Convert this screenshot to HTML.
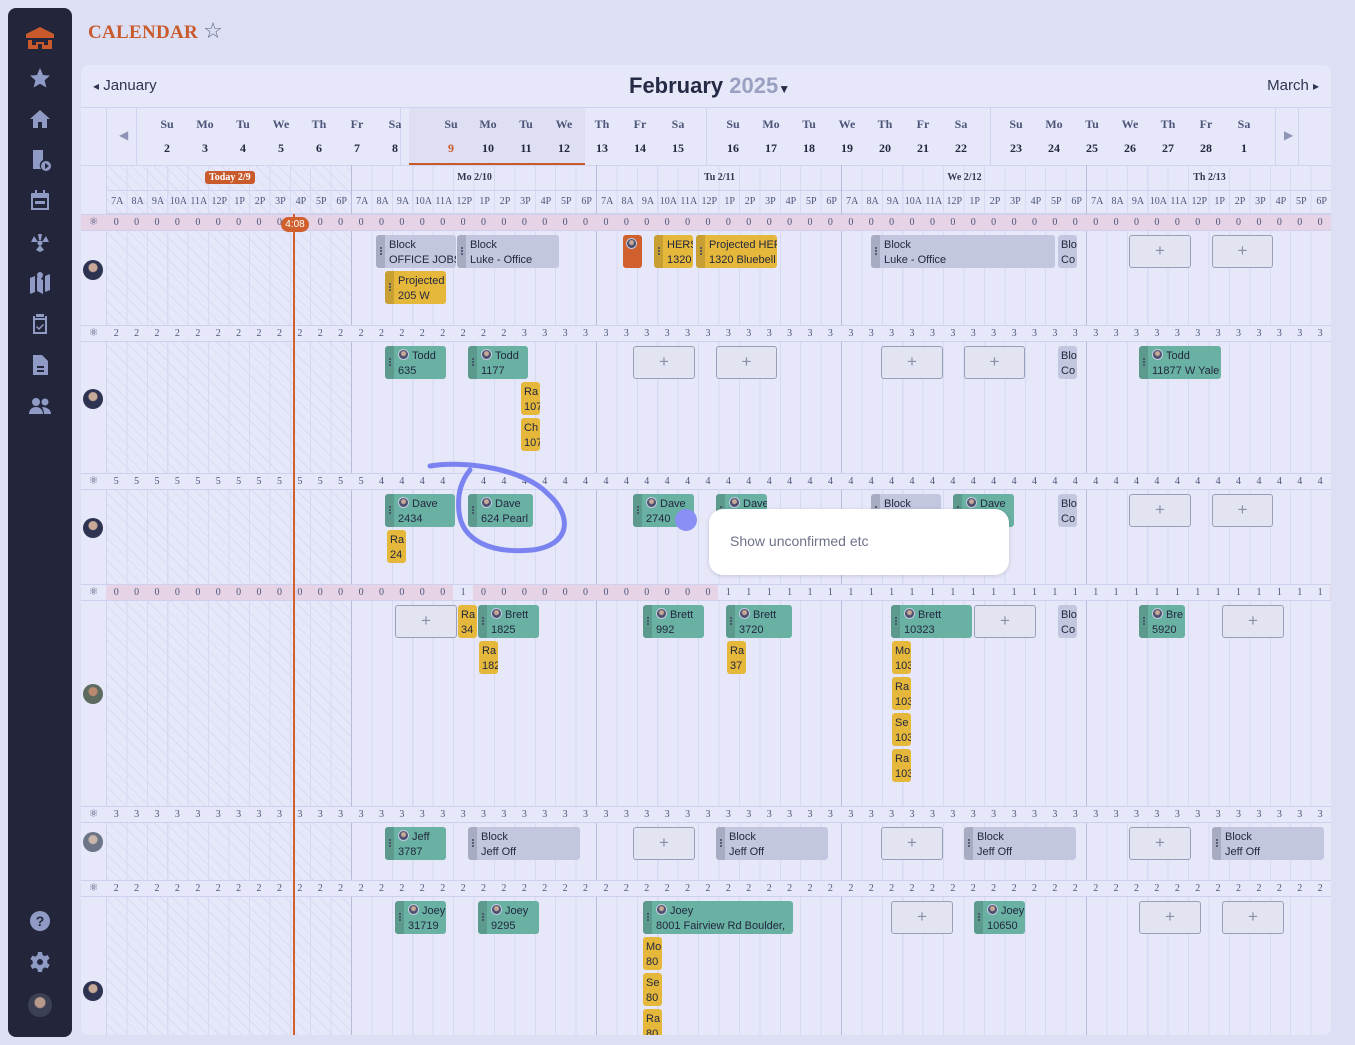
<!DOCTYPE html>
<html><head><meta charset="utf-8">
<style>
*{box-sizing:border-box;margin:0;padding:0}
body{width:1355px;height:1045px;background:#dde0f5;font-family:"Liberation Sans",sans-serif;position:relative;overflow:hidden;color:#2a2f4a}
.a{position:absolute}
.side{left:8px;top:8px;width:64px;height:1029px;background:#23263b;border-radius:8px}
.side svg{position:absolute;left:20px;width:24px;height:24px;fill:#8f9bc4}
.title{left:88px;top:19px;font:bold 19px "Liberation Serif",serif;color:#c95a2c;letter-spacing:.3px}
.card{left:81px;top:65px;width:1250px;height:970px;background:#e6e8fa;border-radius:8px;overflow:hidden}
.wk{font:bold 12px "Liberation Serif",serif;color:#4d5578;text-align:center;width:30px}
.wn{font:bold 12px "Liberation Serif",serif;color:#23283f;text-align:center;width:30px}
.vl{width:1px;background:#cfd3ef}
.day{top:100px;width:245px;height:870px;border-left:1px solid #b8bcd8;background:repeating-linear-gradient(90deg,transparent 0 19.4px,#d6d9f2 19.4px 20.42px)}
.hatch{background:repeating-linear-gradient(90deg,transparent 0 19.4px,#d6d9f2 19.4px 20.42px),repeating-linear-gradient(45deg,transparent 0 7px,#d9dcf2 7px 8px)}
.dh{font:bold 10px "Liberation Serif",serif;text-align:center;width:245px;top:7px;color:#33384f}
.hrs{top:25px;display:flex;width:245px;height:24px;border-top:1px solid #cfd3ef;border-bottom:1px solid #cfd3ef}
.hrs span{width:20.42px;font:10px "Liberation Serif",serif;color:#4d5578;text-align:center;line-height:22px;overflow:hidden;white-space:nowrap}
.cr{left:0;width:1250px;height:17px;display:flex;border-top:1px solid #cdd1ee;border-bottom:1px solid #cdd1ee;background:#e6e8fa}
.cr .ic{width:25px;text-align:center;font-size:11px;color:#4d5578;line-height:15px}
.cr b{width:20.42px;font:normal 10px "Liberation Serif",serif;color:#4d5578;text-align:center;line-height:15px}
.pk{background:#e6d3e6}
.cr.pk b.n{background:#e6e8fa}
.ev{border-radius:3px;font-size:11px;line-height:15px;padding:3px 0 0 13px;overflow:hidden;white-space:nowrap;color:#23283f;height:33px}
.ev:before{content:"";position:absolute;left:0;top:0;width:9px;height:100%;background:rgba(0,0,0,.13);border-radius:3px 0 0 3px}
.ev:after{content:"";position:absolute;left:4px;top:12px;width:2px;height:2px;background:#3d4460;border-radius:1px;box-shadow:0 3px #3d4460,0 6px #3d4460}
.g{background:#c2c6df}.t{background:#69b1a3}.y{background:#e5b73a}
.sm{border-radius:3px;font-size:11px;line-height:15px;padding:3px 0 0 3px;overflow:hidden;white-space:nowrap;width:19px;height:33px;background:#e5b73a;color:#23283f}
.pl{border:1px solid #9a9fb8;background:#e3e4f2;border-radius:3px;height:33px;text-align:center;line-height:30px;color:#8a8fa8;font-size:17px}
.av{width:11px;height:11px;border-radius:50%;background:radial-gradient(circle at 50% 40%,#c8a896 0 2px,#4a5070 3px);display:inline-block;vertical-align:-1px;margin-right:3px;border:1px solid #c7cbe0}
.ra{width:20px;height:20px;border-radius:50%;background:radial-gradient(circle at 50% 38%,#c8a896 0 4px,#2d3350 5px 100%);left:83px}
</style></head><body>
<div class="a side">
<svg style="top:18px;width:30px;left:17px" viewBox="0 0 30 24"><path fill="#c95a2c" d="M15 1 1 8v4h28V8zM3 14v9h10v-5h4v5h10v-9h-4v5h-4v-3h-8v3H7v-5z"/></svg>
<svg style="top:58px" viewBox="0 0 24 24"><path d="M12 2l3 7 7 .6-5.4 4.7 1.7 7.2L12 17.8 5.7 21.5l1.7-7.2L2 9.6 9 9z"/></svg>
<svg style="top:99px" viewBox="0 0 24 24"><path d="M12 3 2 12h3v9h5v-6h4v6h5v-9h3z"/></svg>
<svg style="top:140px" viewBox="0 0 24 24"><path d="M5 2h10v10a6 6 0 0 0-2 9H5zM18 13a5 5 0 1 1 0 10 5 5 0 0 1 0-10zm-1 2v6l4-3z"/></svg>
<svg style="top:181px" viewBox="0 0 24 24"><path d="M7 1h2v3h6V1h2v3h3a1 1 0 0 1 1 1v16H3V5a1 1 0 0 1 1-1h3zM5 9v10h14V9zm2 3h10v3H7z"/></svg>
<svg style="top:222px" viewBox="0 0 24 24"><circle cx="12" cy="13" r="2.5"/><path d="M10 4h4l-1 6h-2zM3 12l3-6 4 6zM21 12l-3-6-4 6zM8 20l4-5 4 5-4 2z"/></svg>
<svg style="top:263px" viewBox="0 0 24 24"><path d="M2 7l5-2v16l-5 2zM17 5l5-2v16l-5 2zM9 6l6 3v14l-6-3zM12 1a3 3 0 0 1 3 3c0 2-3 5-3 5S9 6 9 4a3 3 0 0 1 3-3z"/></svg>
<svg style="top:304px" viewBox="0 0 24 24"><path d="M8 2h8v3H8zM5 4h2v2h10V4h2v18H5zm2 4v12h10V8zm2 6 2 2 4-4 1 1-5 5-3-3z"/></svg>
<svg style="top:345px" viewBox="0 0 24 24"><path d="M5 2h9l6 6v14H5zm4 11v2h7v-2zm0 4v2h7v-2z"/></svg>
<svg style="top:386px" viewBox="0 0 24 24"><circle cx="8" cy="8" r="4"/><circle cx="17" cy="8" r="3.5"/><path d="M1 20c0-4 3-7 7-7s7 3 7 7zM14 13c4 0 9 2 9 7h-7c0-3-1-5-2-7z"/></svg>
<svg style="top:901px" viewBox="0 0 24 24"><circle cx="12" cy="12" r="10"/><text x="12" y="17" font-size="14" font-weight="bold" text-anchor="middle" fill="#23263b" font-family="Liberation Sans">?</text></svg>
<svg style="top:942px" viewBox="0 0 24 24"><path d="M10 2h4l.6 3 2.2 1.2 2.8-1.2 2 3.4-2.3 2v2.6l2.3 2-2 3.4-2.8-1.2L14.6 19 14 22h-4l-.6-3-2.2-1.2-2.8 1.2-2-3.4 2.3-2v-2.6l-2.3-2 2-3.4 2.8 1.2L9.4 5zm2 7a3 3 0 1 0 0 6 3 3 0 0 0 0-6z"/></svg>
<div class="a" style="left:20px;top:985px;width:24px;height:24px;border-radius:50%;background:radial-gradient(circle at 50% 40%,#b8998a 0 5px,#3b4055 6px)"></div>
</div>
<div class="a title">CALENDAR <span style="color:#5c6585;font-size:22px;font-family:'DejaVu Sans'">☆</span></div>

<div class="a card">
<div class="a" style="left:12px;top:12px;font-size:15px;color:#2f3550"><span style="font-size:12px">◂</span> January</div>
<div class="a" style="left:548px;top:8px;font-size:22px;font-weight:bold;color:#252a45">February <span style="color:#9aa0bf">2025</span><span style="font-size:12px">▼</span></div>
<div class="a" style="right:12px;top:12px;font-size:15px;color:#2f3550">March <span style="font-size:12px">▸</span></div>
<div class="a" style="left:0;top:42px;width:1250px;height:1px;background:#cfd3ef"></div>
<div class="a vl" style="left:25px;top:42px;height:58px"></div>
<div class="a vl" style="left:55px;top:42px;height:58px"></div>
<div class="a" style="left:38px;top:63px;color:#8e94b3;font-size:12px">◀</div>
<div class="a vl" style="left:319px;top:42px;height:58px"></div>
<div class="a" style="left:328px;top:43px;width:176px;height:57px;background:#dfdff3;border-bottom:2px solid #c95a2c"></div>
<div class="a vl" style="left:625px;top:42px;height:58px"></div>
<div class="a vl" style="left:909px;top:42px;height:58px"></div>
<div class="a vl" style="left:1194px;top:42px;height:58px"></div>
<div class="a vl" style="left:1217px;top:42px;height:58px"></div>
<div class="a" style="left:1203px;top:63px;color:#8e94b3;font-size:12px">▶</div>
<div class="a" style="left:0;top:100px;width:1250px;height:1px;background:#cfd3ef"></div>
<div class="a" style="top:52px;left:0">
<div class="a wk" style="left:71px">Su</div><div class="a wk" style="left:109px">Mo</div><div class="a wk" style="left:147px">Tu</div><div class="a wk" style="left:185px">We</div><div class="a wk" style="left:223px">Th</div><div class="a wk" style="left:261px">Fr</div><div class="a wk" style="left:299px">Sa</div>
<div class="a wk" style="left:355px">Su</div><div class="a wk" style="left:392px">Mo</div><div class="a wk" style="left:430px">Tu</div><div class="a wk" style="left:468px">We</div><div class="a wk" style="left:506px">Th</div><div class="a wk" style="left:544px">Fr</div><div class="a wk" style="left:582px">Sa</div>
<div class="a wk" style="left:637px">Su</div><div class="a wk" style="left:675px">Mo</div><div class="a wk" style="left:713px">Tu</div><div class="a wk" style="left:751px">We</div><div class="a wk" style="left:789px">Th</div><div class="a wk" style="left:827px">Fr</div><div class="a wk" style="left:865px">Sa</div>
<div class="a wk" style="left:920px">Su</div><div class="a wk" style="left:958px">Mo</div><div class="a wk" style="left:996px">Tu</div><div class="a wk" style="left:1034px">We</div><div class="a wk" style="left:1072px">Th</div><div class="a wk" style="left:1110px">Fr</div><div class="a wk" style="left:1148px">Sa</div>
</div>
<div class="a" style="top:76px;left:0">
<div class="a wn" style="left:71px">2</div><div class="a wn" style="left:109px">3</div><div class="a wn" style="left:147px">4</div><div class="a wn" style="left:185px">5</div><div class="a wn" style="left:223px">6</div><div class="a wn" style="left:261px">7</div><div class="a wn" style="left:299px">8</div>
<div class="a wn" style="left:355px;color:#c95a2c">9</div><div class="a wn" style="left:392px">10</div><div class="a wn" style="left:430px">11</div><div class="a wn" style="left:468px">12</div><div class="a wn" style="left:506px">13</div><div class="a wn" style="left:544px">14</div><div class="a wn" style="left:582px">15</div>
<div class="a wn" style="left:637px">16</div><div class="a wn" style="left:675px">17</div><div class="a wn" style="left:713px">18</div><div class="a wn" style="left:751px">19</div><div class="a wn" style="left:789px">20</div><div class="a wn" style="left:827px">21</div><div class="a wn" style="left:865px">22</div>
<div class="a wn" style="left:920px">23</div><div class="a wn" style="left:958px">24</div><div class="a wn" style="left:996px">25</div><div class="a wn" style="left:1034px">26</div><div class="a wn" style="left:1072px">27</div><div class="a wn" style="left:1110px">28</div><div class="a wn" style="left:1148px">1</div>
</div>

<div class="a vl" style="left:25px;top:100px;height:870px"></div>
<div class="a day hatch" style="left:25px;border-left:1px solid #cfd3ef"><div class="a" style="left:98px;top:6px;background:#c95a2c;color:#fff;font:bold 10px 'Liberation Serif',serif;padding:1px 4px;border-radius:3px">Today 2/9</div><div class="a hrs"><span>7A</span><span>8A</span><span>9A</span><span>10A</span><span>11A</span><span>12P</span><span>1P</span><span>2P</span><span>3P</span><span>4P</span><span>5P</span><span>6P</span></div></div>
<div class="a day" style="left:270px"><div class="a dh">Mo 2/10</div><div class="a hrs"><span>7A</span><span>8A</span><span>9A</span><span>10A</span><span>11A</span><span>12P</span><span>1P</span><span>2P</span><span>3P</span><span>4P</span><span>5P</span><span>6P</span></div></div>
<div class="a day" style="left:515px"><div class="a dh">Tu 2/11</div><div class="a hrs"><span>7A</span><span>8A</span><span>9A</span><span>10A</span><span>11A</span><span>12P</span><span>1P</span><span>2P</span><span>3P</span><span>4P</span><span>5P</span><span>6P</span></div></div>
<div class="a day" style="left:760px"><div class="a dh">We 2/12</div><div class="a hrs"><span>7A</span><span>8A</span><span>9A</span><span>10A</span><span>11A</span><span>12P</span><span>1P</span><span>2P</span><span>3P</span><span>4P</span><span>5P</span><span>6P</span></div></div>
<div class="a day" style="left:1005px"><div class="a dh">Th 2/13</div><div class="a hrs"><span>7A</span><span>8A</span><span>9A</span><span>10A</span><span>11A</span><span>12P</span><span>1P</span><span>2P</span><span>3P</span><span>4P</span><span>5P</span><span>6P</span></div></div>

<div class="a cr pk" style="top:149px"><span class="ic">⚛</span><b>0</b><b>0</b><b>0</b><b>0</b><b>0</b><b>0</b><b>0</b><b>0</b><b>0</b><b>0</b><b>0</b><b>0</b><b>0</b><b>0</b><b>0</b><b>0</b><b>0</b><b>0</b><b>0</b><b>0</b><b>0</b><b>0</b><b>0</b><b>0</b><b>0</b><b>0</b><b>0</b><b>0</b><b>0</b><b>0</b><b>0</b><b>0</b><b>0</b><b>0</b><b>0</b><b>0</b><b>0</b><b>0</b><b>0</b><b>0</b><b>0</b><b>0</b><b>0</b><b>0</b><b>0</b><b>0</b><b>0</b><b>0</b><b>0</b><b>0</b><b>0</b><b>0</b><b>0</b><b>0</b><b>0</b><b>0</b><b>0</b><b>0</b><b>0</b><b>0</b></div>
<div class="a cr" style="top:260px"><span class="ic">⚛</span><b>2</b><b>2</b><b>2</b><b>2</b><b>2</b><b>2</b><b>2</b><b>2</b><b>2</b><b>2</b><b>2</b><b>2</b><b>2</b><b>2</b><b>2</b><b>2</b><b>2</b><b>2</b><b>2</b><b>2</b><b>3</b><b>3</b><b>3</b><b>3</b><b>3</b><b>3</b><b>3</b><b>3</b><b>3</b><b>3</b><b>3</b><b>3</b><b>3</b><b>3</b><b>3</b><b>3</b><b>3</b><b>3</b><b>3</b><b>3</b><b>3</b><b>3</b><b>3</b><b>3</b><b>3</b><b>3</b><b>3</b><b>3</b><b>3</b><b>3</b><b>3</b><b>3</b><b>3</b><b>3</b><b>3</b><b>3</b><b>3</b><b>3</b><b>3</b><b>3</b></div>
<div class="a cr" style="top:408px"><span class="ic">⚛</span><b>5</b><b>5</b><b>5</b><b>5</b><b>5</b><b>5</b><b>5</b><b>5</b><b>5</b><b>5</b><b>5</b><b>5</b><b>5</b><b>4</b><b>4</b><b>4</b><b>4</b><b>4</b><b>4</b><b>4</b><b>4</b><b>4</b><b>4</b><b>4</b><b>4</b><b>4</b><b>4</b><b>4</b><b>4</b><b>4</b><b>4</b><b>4</b><b>4</b><b>4</b><b>4</b><b>4</b><b>4</b><b>4</b><b>4</b><b>4</b><b>4</b><b>4</b><b>4</b><b>4</b><b>4</b><b>4</b><b>4</b><b>4</b><b>4</b><b>4</b><b>4</b><b>4</b><b>4</b><b>4</b><b>4</b><b>4</b><b>4</b><b>4</b><b>4</b><b>4</b></div>
<div class="a cr pk" style="top:519px"><span class="ic" style="background:#e6e8fa">⚛</span><b>0</b><b>0</b><b>0</b><b>0</b><b>0</b><b>0</b><b>0</b><b>0</b><b>0</b><b>0</b><b>0</b><b>0</b><b>0</b><b>0</b><b>0</b><b>0</b><b>0</b><b class="n">1</b><b>0</b><b>0</b><b>0</b><b>0</b><b>0</b><b>0</b><b>0</b><b>0</b><b>0</b><b>0</b><b>0</b><b>0</b><b class="n">1</b><b class="n">1</b><b class="n">1</b><b class="n">1</b><b class="n">1</b><b class="n">1</b><b class="n">1</b><b class="n">1</b><b class="n">1</b><b class="n">1</b><b class="n">1</b><b class="n">1</b><b class="n">1</b><b class="n">1</b><b class="n">1</b><b class="n">1</b><b class="n">1</b><b class="n">1</b><b class="n">1</b><b class="n">1</b><b class="n">1</b><b class="n">1</b><b class="n">1</b><b class="n">1</b><b class="n">1</b><b class="n">1</b><b class="n">1</b><b class="n">1</b><b class="n">1</b><b class="n">1</b></div>
<div class="a cr" style="top:741px"><span class="ic">⚛</span><b>3</b><b>3</b><b>3</b><b>3</b><b>3</b><b>3</b><b>3</b><b>3</b><b>3</b><b>3</b><b>3</b><b>3</b><b>3</b><b>3</b><b>3</b><b>3</b><b>3</b><b>3</b><b>3</b><b>3</b><b>3</b><b>3</b><b>3</b><b>3</b><b>3</b><b>3</b><b>3</b><b>3</b><b>3</b><b>3</b><b>3</b><b>3</b><b>3</b><b>3</b><b>3</b><b>3</b><b>3</b><b>3</b><b>3</b><b>3</b><b>3</b><b>3</b><b>3</b><b>3</b><b>3</b><b>3</b><b>3</b><b>3</b><b>3</b><b>3</b><b>3</b><b>3</b><b>3</b><b>3</b><b>3</b><b>3</b><b>3</b><b>3</b><b>3</b><b>3</b></div>
<div class="a cr" style="top:815px"><span class="ic">⚛</span><b>2</b><b>2</b><b>2</b><b>2</b><b>2</b><b>2</b><b>2</b><b>2</b><b>2</b><b>2</b><b>2</b><b>2</b><b>2</b><b>2</b><b>2</b><b>2</b><b>2</b><b>2</b><b>2</b><b>2</b><b>2</b><b>2</b><b>2</b><b>2</b><b>2</b><b>2</b><b>2</b><b>2</b><b>2</b><b>2</b><b>2</b><b>2</b><b>2</b><b>2</b><b>2</b><b>2</b><b>2</b><b>2</b><b>2</b><b>2</b><b>2</b><b>2</b><b>2</b><b>2</b><b>2</b><b>2</b><b>2</b><b>2</b><b>2</b><b>2</b><b>2</b><b>2</b><b>2</b><b>2</b><b>2</b><b>2</b><b>2</b><b>2</b><b>2</b><b>2</b></div>
<div class="a" style="left:212px;top:149px;width:1.5px;height:821px;background:#d0602e"></div>
<div class="a" style="left:200px;top:152px;width:28px;height:15px;border-radius:8px;background:#d0602e;color:#fff;font-size:10px;text-align:center;line-height:15px">4:08</div>
</div>

<div class="a ra" style="top:260px"></div>
<div class="a ra" style="top:389px"></div>
<div class="a ra" style="top:518px"></div>
<div class="a ra" style="top:684px;background:radial-gradient(circle at 50% 38%,#b98a70 0 4px,#5c6a60 5px)"></div>
<div class="a ra" style="top:832px;background:radial-gradient(circle at 50% 38%,#c9b6a8 0 4px,#6c7488 5px)"></div>
<div class="a ra" style="top:981px"></div>

<div class="a ev g" style="left:376px;top:235px;width:80px">Block<br>OFFICE JOBS</div>
<div class="a ev g" style="left:457px;top:235px;width:102px">Block<br>Luke - Office</div>
<div class="a ev y" style="left:385px;top:271px;width:61px">Projected<br>205 W</div>
<div class="a" style="left:623px;top:235px;width:19px;height:33px;background:#d0602e;border-radius:3px"><span class="av" style="margin:3px 0 0 3px"></span></div>
<div class="a ev y" style="left:654px;top:235px;width:39px">HERS<br>1320</div>
<div class="a ev y" style="left:696px;top:235px;width:81px">Projected HER<br>1320 Bluebell</div>
<div class="a ev g" style="left:871px;top:235px;width:184px">Block<br>Luke - Office</div>
<div class="a sm g" style="left:1058px;top:235px;background:#c2c6df">Blo<br>Co</div>
<div class="a pl" style="left:1129px;top:235px;width:62px">+</div>
<div class="a pl" style="left:1212px;top:235px;width:61px">+</div>
<div class="a ev t" style="left:385px;top:346px;width:61px"><span class="av"></span>Todd<br>635</div>
<div class="a ev t" style="left:468px;top:346px;width:60px"><span class="av"></span>Todd<br>1177</div>
<div class="a sm" style="left:521px;top:382px">Ra<br>107</div>
<div class="a sm" style="left:521px;top:418px">Ch<br>107</div>
<div class="a pl" style="left:633px;top:346px;width:62px">+</div>
<div class="a pl" style="left:716px;top:346px;width:61px">+</div>
<div class="a pl" style="left:881px;top:346px;width:62px">+</div>
<div class="a pl" style="left:964px;top:346px;width:61px">+</div>
<div class="a sm" style="left:1058px;top:346px;background:#c2c6df">Blo<br>Co</div>
<div class="a ev t" style="left:1139px;top:346px;width:82px"><span class="av"></span>Todd<br>11877 W Yale</div>
<div class="a ev t" style="left:385px;top:494px;width:70px"><span class="av"></span>Dave<br>2434</div>
<div class="a ev t" style="left:468px;top:494px;width:65px"><span class="av"></span>Dave<br>624 Pearl</div>
<div class="a sm" style="left:387px;top:530px">Ra<br>24</div>
<div class="a ev t" style="left:633px;top:494px;width:61px"><span class="av"></span>Dave<br>2740</div>
<div class="a ev t" style="left:716px;top:494px;width:51px"><span class="av"></span>Dave<br></div>
<div class="a ev g" style="left:871px;top:494px;width:70px">Block<br></div>
<div class="a ev t" style="left:953px;top:494px;width:61px"><span class="av"></span>Dave<br></div>
<div class="a sm" style="left:1058px;top:494px;background:#c2c6df">Blo<br>Co</div>
<div class="a pl" style="left:1129px;top:494px;width:62px">+</div>
<div class="a pl" style="left:1212px;top:494px;width:61px">+</div>
<div class="a pl" style="left:395px;top:605px;width:62px">+</div>
<div class="a sm" style="left:458px;top:605px">Ra<br>34</div>
<div class="a ev t" style="left:478px;top:605px;width:61px"><span class="av"></span>Brett<br>1825</div>
<div class="a sm" style="left:479px;top:641px">Ra<br>182</div>
<div class="a ev t" style="left:643px;top:605px;width:61px"><span class="av"></span>Brett<br>992</div>
<div class="a ev t" style="left:726px;top:605px;width:66px"><span class="av"></span>Brett<br>3720</div>
<div class="a sm" style="left:727px;top:641px">Ra<br>37</div>
<div class="a ev t" style="left:891px;top:605px;width:81px"><span class="av"></span>Brett<br>10323</div>
<div class="a pl" style="left:974px;top:605px;width:62px">+</div>
<div class="a sm" style="left:892px;top:641px">Mo<br>103</div>
<div class="a sm" style="left:892px;top:677px">Ra<br>103</div>
<div class="a sm" style="left:892px;top:713px">Se<br>103</div>
<div class="a sm" style="left:892px;top:749px">Ra<br>103</div>
<div class="a sm" style="left:1058px;top:605px;background:#c2c6df">Blo<br>Co</div>
<div class="a ev t" style="left:1139px;top:605px;width:46px"><span class="av"></span>Bre<br>5920</div>
<div class="a pl" style="left:1222px;top:605px;width:62px">+</div>
<div class="a ev t" style="left:385px;top:827px;width:61px"><span class="av"></span>Jeff<br>3787</div>
<div class="a ev g" style="left:468px;top:827px;width:112px">Block<br>Jeff Off</div>
<div class="a pl" style="left:633px;top:827px;width:62px">+</div>
<div class="a ev g" style="left:716px;top:827px;width:112px">Block<br>Jeff Off</div>
<div class="a pl" style="left:881px;top:827px;width:62px">+</div>
<div class="a ev g" style="left:964px;top:827px;width:112px">Block<br>Jeff Off</div>
<div class="a pl" style="left:1129px;top:827px;width:62px">+</div>
<div class="a ev g" style="left:1212px;top:827px;width:112px">Block<br>Jeff Off</div>
<div class="a ev t" style="left:395px;top:901px;width:51px"><span class="av"></span>Joey<br>31719</div>
<div class="a ev t" style="left:478px;top:901px;width:61px"><span class="av"></span>Joey<br>9295</div>
<div class="a ev t" style="left:643px;top:901px;width:150px"><span class="av"></span>Joey<br>8001 Fairview Rd Boulder,</div>
<div class="a sm" style="left:643px;top:937px">Mo<br>80</div>
<div class="a sm" style="left:643px;top:973px">Se<br>80</div>
<div class="a sm" style="left:643px;top:1009px;height:26px;border-radius:3px 3px 0 0">Ra<br>80</div>
<div class="a pl" style="left:891px;top:901px;width:62px">+</div>
<div class="a ev t" style="left:974px;top:901px;width:51px"><span class="av"></span>Joey<br>10650</div>
<div class="a pl" style="left:1139px;top:901px;width:62px">+</div>
<div class="a pl" style="left:1222px;top:901px;width:62px">+</div>

<svg class="a" style="left:0;top:0" width="1355" height="1045"><path d="M430 466C470 460 525 470 548 494C572 515 572 545 532 550C490 554 462 540 459 512C457 492 462 480 470 470" fill="none" stroke="#7b83f0" stroke-width="5" stroke-linecap="round"/><circle cx="686" cy="520" r="11" fill="#8a8ff5"/></svg>
<div class="a" style="left:709px;top:509px;width:300px;height:66px;background:#fff;border-radius:14px;box-shadow:0 1px 4px rgba(0,0,0,.15);font-size:14px;color:#6d7388;padding:24px 0 0 21px">Show unconfirmed etc</div>
</body></html>
